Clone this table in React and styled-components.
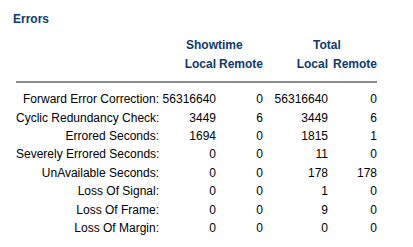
import { createGlobalStyle, styled } from "styled-components";

const GlobalStyle = createGlobalStyle`
    body {
        margin: 0;
        background: #ffffff;
        font-family: "Liberation Sans", Arial, sans-serif;
        font-size: 12px;
        color: #000000;
    }
`

const rows = [
    ["Forward Error Correction:", "56316640", "0", "56316640", "0"],
    ["Cyclic Redundancy Check:", "3449", "6", "3449", "6"],
    ["Errored Seconds:", "1694", "0", "1815", "1"],
    ["Severely Errored Seconds:", "0", "0", "11", "0"],
    ["UnAvailable Seconds:", "0", "0", "178", "178"],
    ["Loss Of Signal:", "0", "0", "1", "0"],
    ["Loss Of Frame:", "0", "0", "9", "0"],
    ["Loss Of Margin:", "0", "0", "0", "0"],
]

const App = () =>
{
    return (
    <Page>
        <GlobalStyle />
        <Title>Errors</Title>
        <Panel>
            <HeadGrid>
                <GroupHead $span="2 / 4" $pad={25}>Showtime</GroupHead>
                <GroupHead $span="4 / 6" $pad={50}>Total</GroupHead>
                <ColHead $col={2}>Local</ColHead>
                <ColHead $col={3}>Remote</ColHead>
                <ColHead $col={4}>Local</ColHead>
                <ColHead $col={5}>Remote</ColHead>
            </HeadGrid>
            <Rule />
            <DataGrid>
                {rows.map((r) => (
                    <Row key={r[0]}>
                        <Label>{r[0]}</Label>
                        <Value>{r[1]}</Value>
                        <Value>{r[2]}</Value>
                        <Value>{r[3]}</Value>
                        <Value>{r[4]}</Value>
                    </Row>
                ))}
            </DataGrid>
        </Panel>
    </Page>)
}

const Page = styled.div`
    padding: 12px 0 0 13px;
`

const Title = styled.div`
    color: #0e3a6e;
    font-weight: bold;
    font-size: 12px;
    line-height: 14px;
`

const Panel = styled.div`
    margin: 10px 0 0 3px;
    width: 361px;
`

const columns = "145px 55px 47px 65px 49px"

const HeadGrid = styled.div`
    display: grid;
    grid-template-columns: ${columns};
    grid-auto-rows: 19px;
    line-height: 19px;
    color: #0e3a6e;
    font-weight: bold;
`

const GroupHead = styled.div`
    grid-column: ${(p) => p.$span};
    grid-row: 1;
    padding-left: ${(p) => p.$pad}px;
`

const ColHead = styled.div`
    grid-column: ${(p) => p.$col};
    grid-row: 2;
    text-align: right;
    white-space: nowrap;
`

const Rule = styled.div`
    height: 2px;
    background: #8a8a8a;
    margin-top: 7px;
`

const DataGrid = styled.div`
    display: grid;
    grid-template-columns: ${columns};
    grid-auto-rows: 18.43px;
    line-height: 18.43px;
    margin-top: 7.2px;
`

const Row = styled.div`
    display: contents;
`

const Label = styled.div`
    text-align: right;
    white-space: nowrap;
    padding-right: 2px;
`

const Value = styled.div`
    text-align: right;
    white-space: nowrap;
`

export default App;
